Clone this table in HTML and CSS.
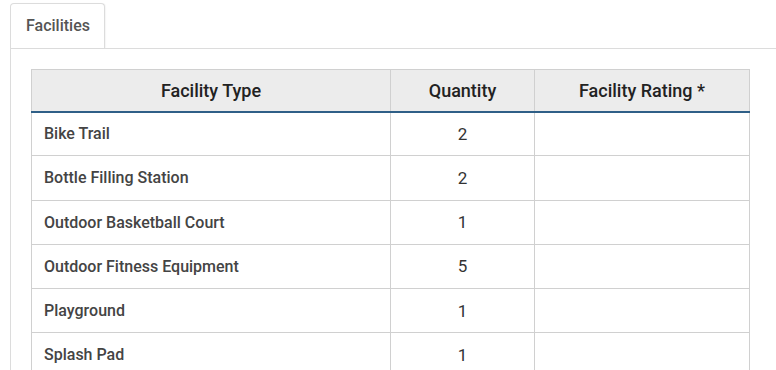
FILE: index.html
```html
<!DOCTYPE html>
<html>
<head>
<meta charset="utf-8">
<link rel="stylesheet" href="styles.css">
</head>
<body>
<div class="tabs">
  <div class="tab">Facilities</div>
</div>
<div class="panel">
  <table class="grid">
    <colgroup>
      <col class="c-type">
      <col class="c-qty">
      <col class="c-rate">
    </colgroup>
    <thead>
      <tr>
        <th>Facility Type</th>
        <th>Quantity</th>
        <th>Facility Rating *</th>
      </tr>
    </thead>
    <tbody>
      <tr><td>Bike Trail</td><td class="num">2</td><td></td></tr>
      <tr><td>Bottle Filling Station</td><td class="num">2</td><td></td></tr>
      <tr><td>Outdoor Basketball Court</td><td class="num">1</td><td></td></tr>
      <tr><td>Outdoor Fitness Equipment</td><td class="num">5</td><td></td></tr>
      <tr><td>Playground</td><td class="num">1</td><td></td></tr>
      <tr><td>Splash Pad</td><td class="num">1</td><td></td></tr>
    </tbody>
  </table>
</div>
</body>
</html>
```
FILE: styles.css
```css
html, body {
  margin: 0;
  padding: 0;
  background: #fff;
  font-family: Roboto, "Liberation Sans", sans-serif;
  overflow: hidden;
}
.tabs {
  display: flex;
  padding: 3px 0 0 10px;
}
.tab {
  width: 95px;
  height: 45px;
  box-sizing: border-box;
  border: 1px solid #dcdcdc;
  border-bottom: none;
  border-radius: 4px 4px 0 0;
  background: #fff;
  color: #555;
  font-size: 16px;
  font-weight: 500;
  line-height: 44px;
  padding-left: 15px;
  box-shadow: 1px 0 1px rgba(0,0,0,0.04);
}
.panel {
  margin-left: 10px;
  border-left: 1px solid #dcdcdc;
  border-top: 1px solid #dcdcdc;
  padding: 20px 26px 20px 20px;
}
.grid {
  border-collapse: collapse;
  width: 718px;
  table-layout: fixed;
}
.c-type { width: 359px; }
.c-qty { width: 144px; }
.c-rate { width: 215px; }
.grid th {
  box-sizing: border-box;
  background: #ececec;
  color: #222;
  font-size: 18px;
  font-weight: 500;
  height: 42px;
  padding: 0 12px;
  border: 1px solid #d0d0d0;
  border-bottom: 2px solid #2f5f87;
  text-align: center;
}
.grid td {
  box-sizing: border-box;
  border: 1px solid #d0d0d0;
  color: #444;
  font-size: 16px;
  font-weight: 500;
  height: 44.25px;
  padding: 0 12px;
  vertical-align: middle;
}
.grid td.num {
  text-align: center;
  font-weight: 400;
  color: #333;
  font-size: 17px;
}
```
